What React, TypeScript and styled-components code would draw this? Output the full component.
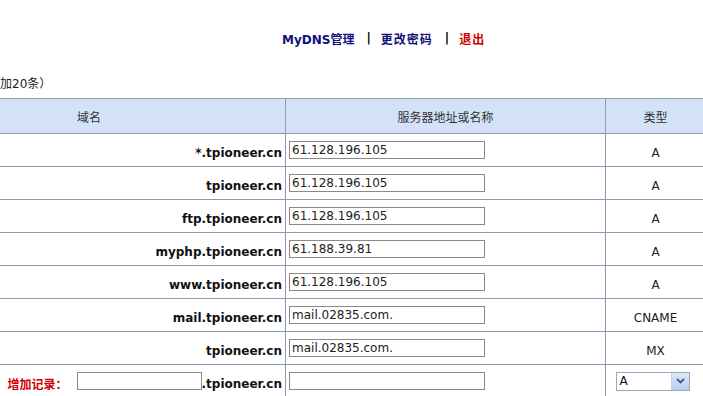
import React from "react";
import styled, { createGlobalStyle } from "styled-components";

const GlobalStyle = createGlobalStyle`
    html, body {
        margin: 0;
        padding: 0;
        background: #ffffff;
        overflow: hidden;
    }
    body {
        font-family: "DejaVu Sans", Verdana, "Noto Sans CJK SC", sans-serif;
        font-size: 12px;
        color: #000;
    }
`;

const Page = styled.div`
    width: 810px;
    margin-left: -108px;
    display: flex;
    flex-direction: column;
`;

const NavBar = styled.div`
    display: flex;
    align-items: center;
    height: 18px;
    margin-top: 29px;
    padding-left: 390px;
    font-size: 12px;
    font-weight: bold;
`;

const NavLink = styled.a<{ $color?: string; $spacing?: number }>`
    color: ${(p) => p.$color || "#10107a"};
    letter-spacing: ${(p) => p.$spacing || 0}px;
    text-decoration: none;
    cursor: pointer;
`;

const NavSep = styled.span`
    color: #000;
    margin: 0 10px 0 12px;
`;

const Note = styled.div`
    height: 16px;
    margin-top: 27px;
    margin-bottom: 8px;
    padding-left: 108px;
    font-size: 12px;
    color: #222;
`;

const RecordTable = styled.table`
    width: 810px;
    border-collapse: collapse;
    table-layout: fixed;
`;

const HeadCell = styled.th<{ $w: number }>`
    width: ${(p) => p.$w}px;
    height: 34px;
    padding: 0;
    background: #d3e2f7;
    border: 1px solid #8d9ab3;
    font-weight: normal;
    font-size: 12px;
    color: #333;
    text-align: center;
`;

const Cell = styled.td<{ $align?: string }>`
    height: 32px;
    padding: 0 3px;
    border: 1px solid #8d9ab3;
    text-align: ${(p) => p.$align || "left"};
    vertical-align: middle;
    font-size: 12px;
    color: #111;
    white-space: nowrap;
`;

const CellText = styled.span<{ $bold?: boolean }>`
    display: inline-block;
    margin-top: 5px;
    vertical-align: middle;
    font-weight: ${(p) => (p.$bold ? "bold" : "normal")};
    color: ${(p) => (p.$bold ? "#111" : "#222")};
`;

const AddLabel = styled.span`
    display: inline-block;
    margin-top: 5px;
    margin-right: 9px;
    vertical-align: middle;
    color: #d40000;
    font-weight: bold;
`;

const TextBox = styled.input<{ $w: number }>`
    box-sizing: border-box;
    width: ${(p) => p.$w}px;
    height: 18px;
    margin: 0;
    padding: 0 2px;
    border: 1px solid #8a8a8a;
    font-family: "DejaVu Sans", Verdana, sans-serif;
    font-size: 12px;
    color: #222;
    background: #fff;
    vertical-align: middle;
    outline: none;
`;

const SelectBox = styled.div`
    display: inline-flex;
    align-items: center;
    justify-content: space-between;
    box-sizing: border-box;
    width: 74px;
    height: 19px;
    margin-right: 6px;
    border: 1px solid #9aa7bc;
    background: #fff;
    padding-left: 3px;
    vertical-align: middle;
    font-size: 12px;
    color: #111;
`;

const SelectArrow = styled.span`
    display: flex;
    align-items: center;
    justify-content: center;
    width: 17px;
    height: 17px;
    background: linear-gradient(#dfe8f8, #b9cbee);
    border-left: 1px solid #c7d4ee;
`;

const rows = [
    { host: "*.tpioneer.cn", value: "61.128.196.105", type: "A" },
    { host: "tpioneer.cn", value: "61.128.196.105", type: "A" },
    { host: "ftp.tpioneer.cn", value: "61.128.196.105", type: "A" },
    { host: "myphp.tpioneer.cn", value: "61.188.39.81", type: "A" },
    { host: "www.tpioneer.cn", value: "61.128.196.105", type: "A" },
    { host: "mail.tpioneer.cn", value: "mail.02835.com.", type: "CNAME" },
    { host: "tpioneer.cn", value: "mail.02835.com.", type: "MX" },
];

const App = () => {
    return (
        <>
            <GlobalStyle />
            <Page>
                <NavBar>
                    <NavLink>MyDNS管理</NavLink>
                    <NavSep>|</NavSep>
                    <NavLink $spacing={1}>更改密码</NavLink>
                    <NavSep>|</NavSep>
                    <NavLink $color="#d00000" $spacing={1}>退出</NavLink>
                </NavBar>
                <Note>加20条）</Note>
                <RecordTable>
                    <thead>
                        <tr>
                            <HeadCell $w={392}>域名</HeadCell>
                            <HeadCell $w={319}>服务器地址或名称</HeadCell>
                            <HeadCell $w={99}>类型</HeadCell>
                        </tr>
                    </thead>
                    <tbody>
                        {rows.map((r, i) => (
                            <tr key={i}>
                                <Cell $align="right">
                                    <CellText $bold>{r.host}</CellText>
                                </Cell>
                                <Cell>
                                    <TextBox $w={196} defaultValue={r.value}/>
                                </Cell>
                                <Cell $align="center">
                                    <CellText>{r.type}</CellText>
                                </Cell>
                            </tr>
                        ))}
                        <tr>
                            <Cell $align="right">
                                <AddLabel>增加记录：</AddLabel>
                                <TextBox $w={125}/>
                                <CellText $bold>.tpioneer.cn</CellText>
                            </Cell>
                            <Cell>
                                <TextBox $w={196}/>
                            </Cell>
                            <Cell $align="center">
                                <SelectBox>
                                    A
                                    <SelectArrow>
                                        <svg width="9" height="6" viewBox="0 0 9 6">
                                            <path d="M1 1 L4.5 4.5 L8 1" stroke="#3c5a9c" strokeWidth="1.8" fill="none"/>
                                        </svg>
                                    </SelectArrow>
                                </SelectBox>
                            </Cell>
                        </tr>
                    </tbody>
                </RecordTable>
            </Page>
        </>
    );
};

export default App;
